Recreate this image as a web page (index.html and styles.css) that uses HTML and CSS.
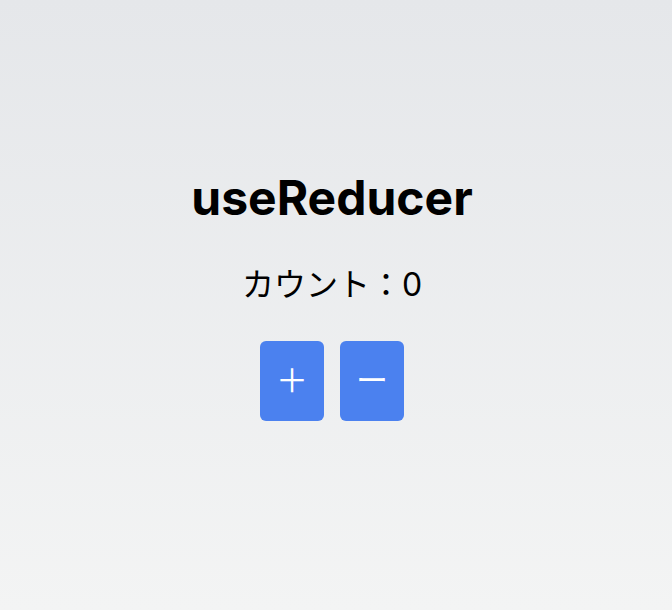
FILE: index.html
```html
<!DOCTYPE html>
<html lang="ja">
<head>
<meta charset="utf-8">
<link rel="stylesheet" href="styles.css">
</head>
<body>
<main class="page">
  <h1 class="title">useReducer</h1>
  <p class="count">カウント：0</p>
  <div class="buttons">
    <button class="btn">＋</button>
    <button class="btn">ー</button>
  </div>
</main>
</body>
</html>
```
FILE: styles.css
```css
html, body { margin: 0; padding: 0; }
body {
  font-family: Inter, "Noto Sans CJK JP", sans-serif;
  color: #000;
}
.page {
  min-height: 610px;
  box-sizing: border-box;
  background: linear-gradient(to bottom, #e5e7ea, #f3f4f4);
  display: flex;
  flex-direction: column;
  align-items: center;
  justify-content: center;
  padding: 0 8px 20px 0;
}
.title {
  margin: 0;
  font-size: 48px;
  font-weight: 700;
  line-height: 1.2;
  letter-spacing: 0;
}
.count {
  margin: 37px 0 0;
  font-size: 32px;
  line-height: 1.4;
}
.buttons {
  display: flex;
  gap: 16px;
  margin-top: 33px;
}
.btn {
  width: 64px;
  height: 80px;
  border: none;
  border-radius: 6px;
  background: #4b81ef;
  color: #fff;
  font-family: "Noto Sans CJK JP", sans-serif;
  font-weight: 400;
  font-size: 32px;
  padding: 0 0 7px;
}
```
